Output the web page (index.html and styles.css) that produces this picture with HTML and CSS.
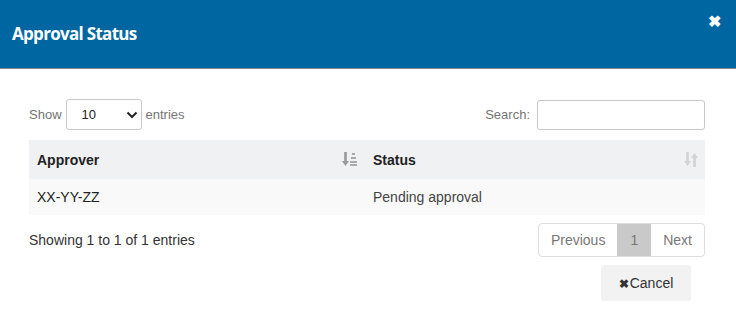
FILE: index.html
```html
<!DOCTYPE html>
<html>
<head>
<meta charset="utf-8">
<link rel="stylesheet" href="styles.css">
</head>
<body>
<div class="modal">
  <div class="modal-header">
    <h4 class="title">Approval Status</h4>
    <span class="close">&#10006;</span>
  </div>
  <div class="modal-body">
    <div class="toolbar">
      <label class="length">Show
        <span class="select"><span class="val">10</span>
          <svg width="12" height="8" viewBox="0 0 12 8"><path d="M1.5 1.5 L6 6 L10.5 1.5" fill="none" stroke="#222" stroke-width="2"/></svg>
        </span>
        entries</label>
      <label class="search">Search: <span class="input"></span></label>
    </div>
    <div class="table">
      <div class="row head">
        <div class="cell c1">Approver
          <svg class="sort active" width="16" height="15" viewBox="0 0 16 15"><path d="M3.5 0 V11" stroke="#999" stroke-width="2.6"/><path d="M0 9 L3.5 14 L7 9 Z" fill="#999"/><rect x="10" y="1" width="3" height="2" fill="#aaa"/><rect x="9" y="5" width="5" height="2" fill="#aaa"/><rect x="8" y="9" width="7" height="2" fill="#aaa"/><rect x="8" y="12" width="7" height="2" fill="#aaa"/></svg>
        </div>
        <div class="cell c2">Status
          <svg class="sort" width="14" height="15" viewBox="0 0 14 15"><path d="M3.5 0 V11" stroke="#d3d3d3" stroke-width="2.6"/><path d="M0 9 L3.5 14 L7 9 Z" fill="#d3d3d3"/><path d="M10.5 4 V15" stroke="#d3d3d3" stroke-width="2.6"/><path d="M7 6 L10.5 1 L14 6 Z" fill="#d3d3d3"/></svg>
        </div>
      </div>
      <div class="row body">
        <div class="cell c1 dark">XX-YY-ZZ</div>
        <div class="cell c2">Pending approval</div>
      </div>
    </div>
    <div class="footer-row">
      <div class="info">Showing 1 to 1 of 1 entries</div>
      <div class="pager">
        <span class="pg">Previous</span><span class="pg cur">1</span><span class="pg">Next</span>
      </div>
    </div>
    <div class="actions">
      <button class="cancel"><span class="x">&#10006;</span>Cancel</button>
    </div>
  </div>
</div>
</body>
</html>
```

FILE: styles.css
```css
html, body { margin: 0; padding: 0; background: #fff; }
body { font-family: "Liberation Sans", Arial, sans-serif; font-size: 14px; color: #333; }
.modal { width: 736px; height: 335px; }
.modal-header {
  height: 69px; background: #0066a1; border-bottom: 1px solid #8a8a8a;
  display: flex; align-items: flex-start; justify-content: space-between; box-sizing: border-box;
  padding: 0 15px 0 12px;
}
.title {
  margin: 23px 0 0 0; color: #fff; font-family: "Open Sans", sans-serif; font-weight: 700;
  font-size: 17px; letter-spacing: -0.7px; line-height: 22px;
}
.close { color: #fff; font-size: 16px; font-weight: 700; margin-top: 13px; line-height: 18px; }
.modal-body { padding: 30px 31px 0 29px; }
.toolbar { display: flex; justify-content: space-between; align-items: center; height: 31px; }
.length, .search { color: #757575; font-size: 13px; display: flex; align-items: center; }
.select {
  display: inline-flex; align-items: center; justify-content: space-between; box-sizing: border-box;
  width: 76px; height: 31px; margin: 0 4px 0 4px; padding: 0 3px 0 15px;
  border: 1px solid #c8c8c8; border-radius: 3px; color: #333; font-size: 13px;
}
.select .val { color: #222; }
.input {
  display: inline-block; width: 168px; height: 30px; box-sizing: border-box; margin-left: 7px;
  border: 1px solid #c8c8c8; border-radius: 3px; background: #fff;
}
.table { margin-top: 10px; }
.row { display: flex; }
.row.head { height: 39px; background: #f0f1f3; font-weight: 700; color: #222; }
.row.body { height: 36px; background: #f9f9f9; color: #444; }
.cell { display: flex; align-items: center; justify-content: space-between; box-sizing: border-box; padding: 0 8px; }
.c1 { width: 336px; }
.c2 { flex: 1; }
.cell.dark { color: #222; }
.sort { margin-right: -1px; }
.footer-row { display: flex; justify-content: space-between; align-items: center; margin-top: 8px; }
.info { color: #333; font-size: 14px; }
.pager { display: flex; border: 1px solid #ddd; border-radius: 4px; height: 34px; box-sizing: border-box; overflow: hidden; }
.pg { display: flex; align-items: center; padding: 0 12px; color: #777; font-size: 14px; }
.pg.cur { background: #c9c9c9; color: #777; padding: 0 13px; }
.actions { display: flex; justify-content: flex-end; margin-top: 8px; padding-right: 14px; }
.cancel {
  width: 90px; height: 36px; background: #f2f2f2; border: none; border-radius: 3px;
  font-family: "Liberation Sans", Arial, sans-serif; font-size: 14px; color: #333; padding: 0;
}
.cancel .x { font-size: 12px; color: #333; font-weight: 700; margin-right: 1px; }
```
